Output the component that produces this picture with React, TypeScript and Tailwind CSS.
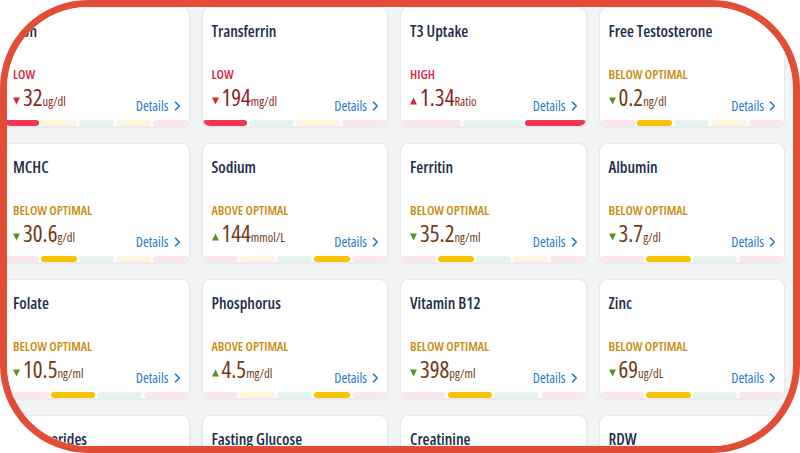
type Seg = "p" | "y" | "g" | "R" | "Y";

type Marker = {
  name: string;
  status: "LOW" | "HIGH" | "BELOW OPTIMAL" | "ABOVE OPTIMAL";
  value: string;
  unit: string;
  bar: Seg[];
};

const markers: Marker[] = [
  { name: "Iron", status: "LOW", value: "32", unit: "ug/dl", bar: ["R", "y", "g", "y", "p"] },
  { name: "Transferrin", status: "LOW", value: "194", unit: "mg/dl", bar: ["R", "g", "y", "p"] },
  { name: "T3 Uptake", status: "HIGH", value: "1.34", unit: "Ratio", bar: ["p", "g", "R"] },
  { name: "Free Testosterone", status: "BELOW OPTIMAL", value: "0.2", unit: "ng/dl", bar: ["p", "Y", "g", "y", "p"] },
  { name: "MCHC", status: "BELOW OPTIMAL", value: "30.6", unit: "g/dl", bar: ["p", "Y", "g", "y", "p"] },
  { name: "Sodium", status: "ABOVE OPTIMAL", value: "144", unit: "mmol/L", bar: ["p", "y", "g", "Y", "p"] },
  { name: "Ferritin", status: "BELOW OPTIMAL", value: "35.2", unit: "ng/ml", bar: ["p", "Y", "g", "y", "p"] },
  { name: "Albumin", status: "BELOW OPTIMAL", value: "3.7", unit: "g/dl", bar: ["p", "Y", "g", "p"] },
  { name: "Folate", status: "BELOW OPTIMAL", value: "10.5", unit: "ng/ml", bar: ["p", "Y", "g", "p"] },
  { name: "Phosphorus", status: "ABOVE OPTIMAL", value: "4.5", unit: "mg/dl", bar: ["p", "y", "g", "Y", "p"] },
  { name: "Vitamin B12", status: "BELOW OPTIMAL", value: "398", unit: "pg/ml", bar: ["p", "Y", "g", "p"] },
  { name: "Zinc", status: "BELOW OPTIMAL", value: "69", unit: "ug/dL", bar: ["p", "Y", "g", "p"] },
  { name: "Triglycerides", status: "ABOVE OPTIMAL", value: "162", unit: "mg/dl", bar: ["p", "g", "Y", "p"] },
  { name: "Fasting Glucose", status: "ABOVE OPTIMAL", value: "98", unit: "mg/dl", bar: ["p", "g", "Y", "p"] },
  { name: "Creatinine", status: "BELOW OPTIMAL", value: "0.7", unit: "mg/dl", bar: ["p", "Y", "g", "p"] },
  { name: "RDW", status: "ABOVE OPTIMAL", value: "13.6", unit: "%", bar: ["p", "g", "Y", "p"] },
];

const segColor: Record<Seg, string> = {
  p: "bg-[#fde6ea]",
  y: "bg-[#fdf5df]",
  g: "bg-[#e3f4ed]",
  R: "bg-[#ef3653]",
  Y: "bg-[#f6c400]",
};

// small filled triangle next to the value
const Arrow = ({ up, color }: { up: boolean; color: string }) => (
  <svg width="7" height="8" viewBox="0 0 7 8" className="shrink-0 self-center mt-[6px]">
    <path d={up ? "M3.5 0.5L7 7.5H0Z" : "M0 0.5H7L3.5 7.5Z"} fill={color} />
  </svg>
);

const Chevron = () => (
  <svg width="7" height="10" viewBox="0 0 7 10" fill="none" className="shrink-0">
    <path d="M1.5 1.2L5.3 5L1.5 8.8" stroke="#1f7bd1" strokeWidth="1.6" strokeLinecap="round" strokeLinejoin="round" />
  </svg>
);

const MarkerCard = ({ m }: { m: Marker }) => {
  const out = m.status === "LOW" || m.status === "HIGH";
  const up = m.status === "HIGH" || m.status === "ABOVE OPTIMAL";
  return (
    <div className="h-[120px] flex flex-col bg-white rounded-[8px] border border-[#e7e9ee] shadow-[0_1px_3px_rgba(0,0,0,0.05)] overflow-hidden">
      <div className="pt-[12px] pl-[9px] text-[16px] leading-[22px] font-semibold text-[#1e2e4a] whitespace-nowrap">
        {m.name}
      </div>
      <div
        className={`mt-[24px] pl-[9px] text-[13px] leading-[16px] font-semibold ${
          out ? "text-[#d8283c]" : "text-[#c88a0c]"
        }`}
      >
        {m.status}
      </div>
      <div className="mt-[4px] pl-[9px] pr-[8px] flex items-start justify-between">
        <div className={`flex items-baseline ${out ? "text-[#8c1f26]" : "text-[#6e3b14]"}`}>
          <Arrow up={up} color={out ? "#d8283c" : "#5c9124"} />
          <span className="ml-[3px] text-[23px] leading-none">{m.value}</span>
          <span className="text-[12.5px] leading-none">{m.unit}</span>
        </div>
        <div className="mt-[11.5px] flex items-center gap-[5px] text-[14px] leading-[16px] text-[#1f7bd1]">
          Details
          <Chevron />
        </div>
      </div>
      <div className="mt-auto flex gap-[2px]">
        {m.bar.map((s, i) => (
          <div key={i} className={`flex-1 h-[6px] rounded-full ${segColor[s]}`} />
        ))}
      </div>
    </div>
  );
};

export default function App() {
  return (
    <div className="w-[800px] h-[453px] bg-white font-['Open_Sans'] font-stretch-[78%]">
      <div className="h-full w-full rounded-[88px] border-[7px] border-[#e14d36] overflow-hidden bg-[#f3f4f6]">
        <div className="-ml-[4px] grid grid-cols-[repeat(4,186.5px)] gap-x-3 gap-y-4">
          {markers.map((m) => (
            <MarkerCard key={m.name} m={m} />
          ))}
        </div>
      </div>
    </div>
  );
}
